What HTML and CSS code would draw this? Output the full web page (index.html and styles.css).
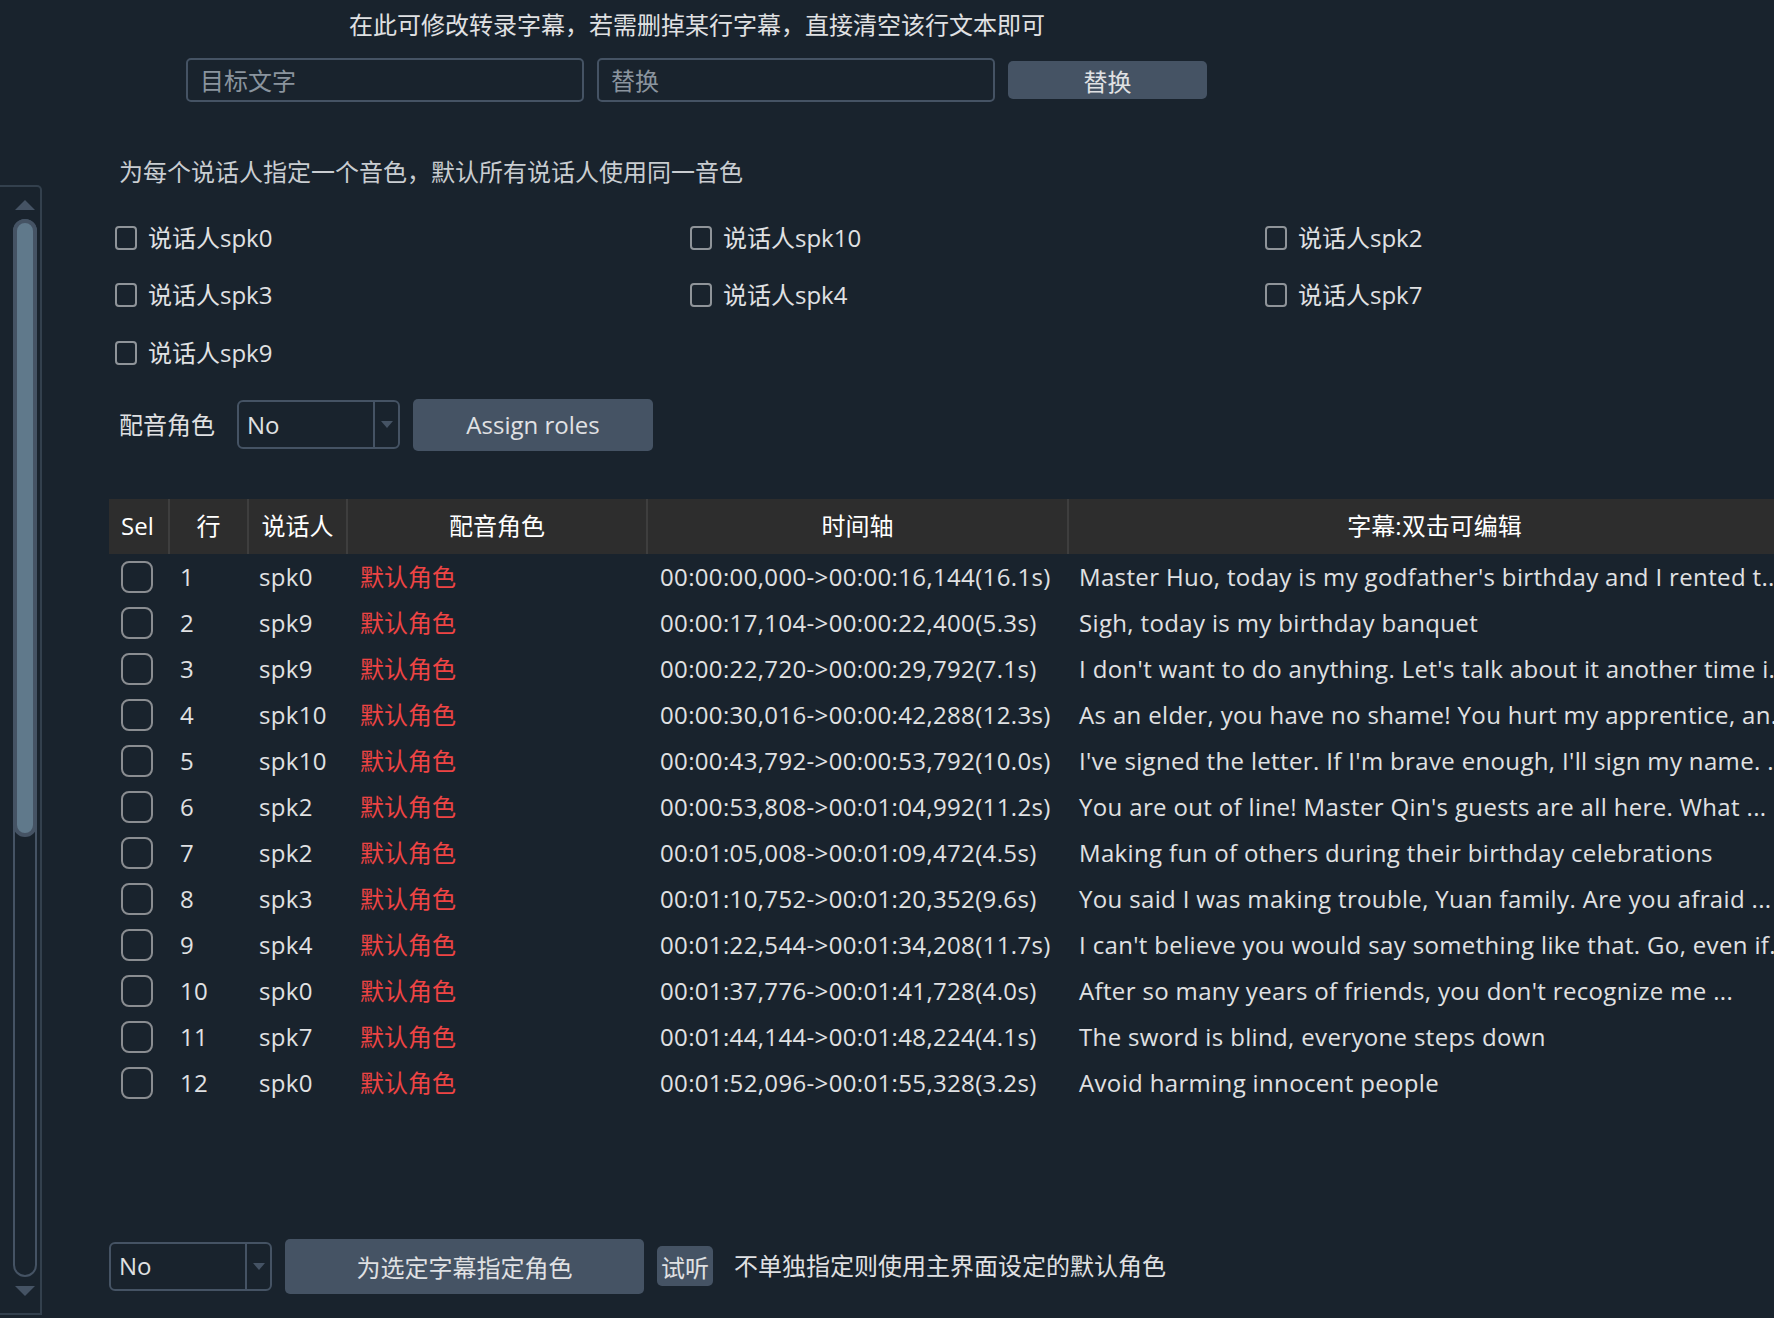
FILE: index.html
```html
<!DOCTYPE html>
<html lang="zh">
<head>
    <meta charset="UTF-8">
    <title>字幕编辑 - 说话人角色</title>
    <link rel="stylesheet" href="styles.css">
</head>
<body>
<div class="side">
    <div class="side--frame">
        <div class="side--arrow up"></div>
        <div class="side--track">
            <div class="side--handle"></div>
        </div>
        <div class="side--arrow down"></div>
    </div>
</div>

<div class="main">

    <div class="top">
        <div class="top--title">在此可修改转录字幕，若需删掉某行字幕，直接清空该行文本即可</div>
        <div class="top--find">
            <input class="field" type="text" placeholder="目标文字">
            <input class="field" type="text" placeholder="替换">
            <button class="btn btn-replace">替换</button>
        </div>
    </div>

    <div class="voice--label">为每个说话人指定一个音色，默认所有说话人使用同一音色</div>

    <div class="spk">
        <label class="spk--item"><span class="box"></span>说话人spk0</label>
        <label class="spk--item"><span class="box"></span>说话人spk10</label>
        <label class="spk--item"><span class="box"></span>说话人spk2</label>
        <label class="spk--item"><span class="box"></span>说话人spk3</label>
        <label class="spk--item"><span class="box"></span>说话人spk4</label>
        <label class="spk--item"><span class="box"></span>说话人spk7</label>
        <label class="spk--item"><span class="box"></span>说话人spk9</label>
    </div>

    <div class="role">
        <span class="role--label">配音角色</span>
        <div class="combo">
            <span class="combo--text">No</span>
            <span class="combo--drop"><i class="tri"></i></span>
        </div>
        <button class="btn btn-assign">Assign roles</button>
    </div>

    <table class="subs">
        <colgroup>
            <col class="c-sel"><col class="c-line"><col class="c-spk">
            <col class="c-role"><col class="c-time"><col class="c-text">
        </colgroup>
        <thead>
        <tr>
            <th class="left">Sel</th>
            <th>行</th>
            <th>说话人</th>
            <th>配音角色</th>
            <th>时间轴</th>
            <th>字幕:双击可编辑</th>
        </tr>
        </thead>
        <tbody id="rows"></tbody>
    </table>

    <div class="bottom">
        <div class="combo combo-small">
            <span class="combo--text">No</span>
            <span class="combo--drop"><i class="tri"></i></span>
        </div>
        <button class="btn btn-pick">为选定字幕指定角色</button>
        <button class="btn btn-listen">试听</button>
        <span class="bottom--hint">不单独指定则使用主界面设定的默认角色</span>
    </div>

</div>

<script>
    'use strict';

    var subs = [
        ['spk0', '00:00:00,000->00:00:16,144(16.1s)', "Master Huo, today is my godfather's birthday and I rented t..."],
        ['spk9', '00:00:17,104->00:00:22,400(5.3s)', 'Sigh, today is my birthday banquet'],
        ['spk9', '00:00:22,720->00:00:29,792(7.1s)', "I don't want to do anything. Let's talk about it another time i..."],
        ['spk10', '00:00:30,016->00:00:42,288(12.3s)', 'As an elder, you have no shame! You hurt my apprentice, an...'],
        ['spk10', '00:00:43,792->00:00:53,792(10.0s)', "I've signed the letter. If I'm brave enough, I'll sign my name. ..."],
        ['spk2', '00:00:53,808->00:01:04,992(11.2s)', "You are out of line! Master Qin's guests are all here. What ..."],
        ['spk2', '00:01:05,008->00:01:09,472(4.5s)', 'Making fun of others during their birthday celebrations'],
        ['spk3', '00:01:10,752->00:01:20,352(9.6s)', 'You said I was making trouble, Yuan family. Are you afraid ...'],
        ['spk4', '00:01:22,544->00:01:34,208(11.7s)', "I can't believe you would say something like that. Go, even if..."],
        ['spk0', '00:01:37,776->00:01:41,728(4.0s)', "After so many years of friends, you don't recognize me ..."],
        ['spk7', '00:01:44,144->00:01:48,224(4.1s)', 'The sword is blind, everyone steps down'],
        ['spk0', '00:01:52,096->00:01:55,328(3.2s)', 'Avoid harming innocent people']
    ];

    var tbody = document.getElementById('rows');
    subs.forEach(function (s, i) {
        var tr = document.createElement('tr');
        tr.innerHTML =
            '<td><span class="row-box"></span></td>' +
            '<td>' + (i + 1) + '</td>' +
            '<td>' + s[0] + '</td>' +
            '<td class="red">默认角色</td>' +
            '<td>' + s[1] + '</td>' +
            '<td class="text">' + s[2] + '</td>';
        tbody.appendChild(tr);
    });
</script>
</body>
</html>
```

FILE: styles.css
```css
*, *:before, *:after {
    box-sizing: border-box;
    padding: 0;
    margin: 0;
}

body {
    width: 1774px;
    height: 1318px;
    overflow: hidden;
    display: flex;
    background: #19232D;
    color: #E0E1E3;
    font-family: "Open Sans", "Noto Sans CJK SC", sans-serif;
    font-size: 24px;
    line-height: 34px;
}

/* left scrollbar */
.side {
    flex: 0 0 42px;
    padding-top: 185px;
}

.side--frame {
    height: 1130px;
    border-top: 2px solid #33404d;
    border-right: 2px solid #33404d;
    border-bottom: 2px solid #33404d;
    border-top-right-radius: 5px;
    padding: 13px 0 0 13px;
    display: flex;
    flex-direction: column;
}

.side--arrow {
    width: 0;
    height: 0;
    margin-left: 2px;
    border-left: 10px solid transparent;
    border-right: 10px solid transparent;
}

.side--arrow.up {
    border-bottom: 10px solid #455364;
}

.side--arrow.down {
    margin-top: 9px;
    border-top: 10px solid #455364;
}

.side--track {
    margin-top: 9px;
    width: 24px;
    height: 1058px;
    border: 2px solid #455364;
    border-radius: 12px;
}

.side--handle {
    height: 618px;
    margin: -2px;
    background: #60798B;
    border: 4px solid #455364;
    border-radius: 12px;
}

/* main column */
.main {
    flex: 1;
    overflow: hidden;
    display: flex;
    flex-direction: column;
}

.top {
    margin-left: 144px;
    width: 1022px;
}

.top--title {
    padding-top: 8px;
    text-align: center;
}

.top--find {
    margin-top: 16px;
    display: flex;
    align-items: center;
    gap: 13px;
}

.field {
    width: 398px;
    height: 44px;
    padding: 0 12px;
    background: #19232D;
    border: 2px solid #455364;
    border-radius: 5px;
    color: #E0E1E3;
    font-family: inherit;
    font-size: 24px;
    outline: 0;
}

.field::placeholder {
    color: #8a949e;
}

.btn {
    background: #455364;
    border: 0;
    border-radius: 5px;
    color: #E0E1E3;
    font-family: inherit;
    font-size: 24px;
}

.btn-replace {
    width: 199px;
    height: 38px;
}

.voice--label {
    margin: 53px 0 0 77px;
    color: #c9cdd1;
}

.spk {
    margin: 20px 0 0 73px;
    display: grid;
    grid-template-columns: 575px 575px 575px;
    grid-auto-rows: 57.5px;
}

.spk--item {
    display: flex;
    align-items: center;
    gap: 11px;
}

.box {
    width: 22px;
    height: 24px;
    border: 2px solid #8f9499;
    border-radius: 4px;
}

.role {
    margin: 17px 0 0 77px;
    display: flex;
    align-items: center;
}

.role--label {
    width: 96px;
    margin-right: 22px;
}

.combo {
    width: 163px;
    height: 49px;
    border: 2px solid #455364;
    border-radius: 6px;
    display: flex;
    align-items: center;
}

.combo--text {
    flex: 1;
    padding-left: 8px;
}

.combo--drop {
    width: 25px;
    height: 100%;
    border-left: 2px solid #455364;
    display: flex;
    align-items: center;
    justify-content: center;
}

.tri {
    width: 0;
    height: 0;
    border-left: 6px solid transparent;
    border-right: 6px solid transparent;
    border-top: 7px solid #455364;
}

.btn-assign {
    margin-left: 13px;
    width: 240px;
    height: 52px;
}

/* subtitle table */
.subs {
    margin: 48px 0 0 67px;
    width: 1691px;
    table-layout: fixed;
    border-collapse: collapse;
    flex: none;
}

.c-sel { width: 60px; }
.c-line { width: 79px; }
.c-spk { width: 99px; }
.c-role { width: 300px; }
.c-time { width: 421px; }
.c-text { width: 732px; }

.subs th {
    height: 55px;
    background: #2d2d2d;
    color: #ffffff;
    font-weight: normal;
    border-left: 2px solid #3e3e3e;
    white-space: nowrap;
}

.subs th:first-child {
    border-left: 0;
}

.subs th.left {
    text-align: left;
    padding-left: 12px;
}

.subs td {
    height: 46px;
    padding-left: 11px;
    white-space: nowrap;
    overflow: hidden;
    letter-spacing: 0.35px;
}

.subs td:nth-child(4),
.subs td:nth-child(5) {
    padding-left: 13px;
}

.subs td:nth-child(4) {
    letter-spacing: 0;
}

.subs .red {
    color: #ee4444;
}

.row-box {
    display: block;
    width: 32px;
    height: 32px;
    border: 2px solid #8a8d91;
    border-radius: 8px;
}

.subs td:first-child {
    padding-left: 12px;
}

/* bottom bar */
.bottom {
    margin: 133px 0 0 67px;
    height: 55px;
    display: flex;
    align-items: center;
}

.combo-small {
    width: 163px;
}

.btn-pick {
    margin-left: 13px;
    width: 359px;
    height: 55px;
}

.btn-listen {
    margin-left: 13px;
    width: 56px;
    height: 40px;
}

.bottom--hint {
    margin-left: 21px;
}
```
